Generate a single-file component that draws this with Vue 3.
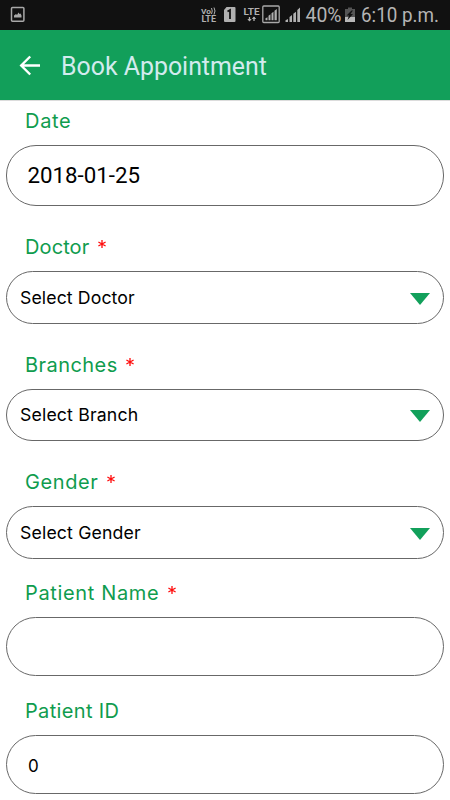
<template>
  <div class="screen">
    <div class="status-bar">
      <svg class="status-icons" width="450" height="30" viewBox="0 0 450 30">
        <!-- Screenshot notification -->
        <rect x="11.5" y="7.6" width="12.4" height="13.6" rx="1" fill="none" stroke="#a9a9a9" stroke-width="1.5" />
        <path d="M14 17.5v-2l2-1.5 1 1 1.5-2.5 1 1.5 1-.5 1 2v2z" fill="#a9a9a9" />
        <!-- VoLTE -->
        <g fill="#b0b0b0" font-weight="700" font-family="Roboto, sans-serif">
          <text x="201" y="13.5" font-size="7.5" textLength="10" lengthAdjust="spacingAndGlyphs">Vo</text>
          <text x="201.500" y="22" font-size="8.5" textLength="14.500" lengthAdjust="spacingAndGlyphs">LTE</text>
          <text x="243.500" y="15" font-size="9.5" textLength="16" lengthAdjust="spacingAndGlyphs">LTE</text>
        </g>
        <path d="M211.500 8q1.500 3 0 6M214 7.500q2 3.500 0 7" fill="none" stroke="#b0b0b0" stroke-width="1" />
        <!-- SIM 1 -->
        <path d="M226.500 7H234.500a1 1 0 0 1 1 1V21a1 1 0 0 1-1 1H225a1 1 0 0 1-1-1V10z" fill="#b0b0b0" />
        <path d="M227.500 11.500l2.500-1.500v9" fill="none" stroke="#111" stroke-width="1.800" />
        <!-- Data arrows -->
        <path d="M249.500 17v4M254 21v-4" stroke="#b0b0b0" stroke-width="1.300" />
        <path d="M247.300 19h4.400l-2.200 2.600zM251.800 19h4.400l-2.200-2.600z" fill="#b0b0b0" />
        <!-- Signals -->
        <rect x="262.800" y="6" width="16.400" height="16.500" rx="1" fill="none" stroke="#a9a9a9" stroke-width="1.300" />
        <path d="M265.500 20.200v-2l2-1v3zM268.500 20.200v-4.500l2-1.500v6zM271.500 20.200v-7l2-1.500v8.500zM274.500 20.200v-9.500l2.300-1.700v11.200z" fill="#b0b0b0" />
        <path d="M285.500 22v-1.800l2.500-1.200v3zM289.500 22v-5l2.500-2v7zM293.300 22v-8.300l2.700-2v10.300zM297.300 22v-12l2.700-2.500v14.500z" fill="#b0b0b0" />
        <text x="305.500" y="21.500" font-size="19.500" fill="#b4b4b4" font-family="Roboto, sans-serif" textLength="36" lengthAdjust="spacingAndGlyphs">40%</text>
        <!-- Battery -->
        <path d="M345 9h3V7.500h4V9h3v8h-10z" fill="#555" />
        <path d="M345 17h10v5h-10z" fill="#b8b8b8" />
        <path d="M351.500 10.500l-5 5h2.500l-1.500 4.500 5.500-6h-2.500l2.500-3.500z" fill="#111" />
        <text x="361" y="21.500" font-size="19.500" fill="#b4b4b4" font-family="Roboto, sans-serif" textLength="78" lengthAdjust="spacingAndGlyphs">6:10 p.m.</text>
      </svg>
    </div>

    <header class="toolbar">
      <button class="btn-back" aria-label="Back">
        <svg width="22" height="22" viewBox="0 0 22 22">
          <path d="M21 10.500H2.500M11.200 1.500L2.200 10.500l9 9" fill="none" stroke="#fff" stroke-width="2.400" />
        </svg>
      </button>
      <h1>Book Appointment</h1>
    </header>

    <form class="form" @submit.prevent>
      <div v-for="campo in campos" :key="campo.id" class="field" :class="'field-' + campo.tipo">
        <label :for="campo.id">
          <span class="label-text" :style="{ letterSpacing: campo.espacio + 'px' }">{{ campo.label }}</span>
          <svg v-if="campo.requerido" class="required" width="8" height="8" viewBox="0 0 8 8">
            <path d="M4 0v8M.4 2l7.200 4M.4 6l7.200-4" stroke="#ff0d0d" stroke-width="1.300" />
          </svg>
        </label>
        <button v-if="campo.tipo === 'select'" :id="campo.id" type="button" class="box select">
          <span :style="{ letterSpacing: campo.espacioValor + 'px' }">{{ campo.valor }}</span>
          <svg width="20" height="12" viewBox="0 0 20 12"><path d="M0 0h20L10 12z" fill="#12a05b" /></svg>
        </button>
        <input v-else :id="campo.id" v-model="campo.valor" type="text" class="box" />
      </div>
    </form>
  </div>
</template>

<script setup>
import { ref } from 'vue';

const campos = ref([
  { id: 'date', label: 'Date', tipo: 'date', valor: '2018-01-25', espacio: 0.7 },
  { id: 'doctor', label: 'Doctor', tipo: 'select', valor: 'Select Doctor', requerido: true, espacio: 0.1, espacioValor: 0.1 },
  { id: 'branches', label: 'Branches', tipo: 'select', valor: 'Select Branch', requerido: true, espacio: 0.45, espacioValor: 0.15 },
  { id: 'gender', label: 'Gender', tipo: 'select', valor: 'Select Gender', requerido: true, espacio: 0.6, espacioValor: 0.15 },
  { id: 'name', label: 'Patient Name', tipo: 'text', valor: '', requerido: true, espacio: 0.65 },
  { id: 'patient-id', label: 'Patient ID', tipo: 'text', valor: '0', espacio: 0.35 }
]);
</script>

<style>
body { margin: 0; background: #fff; }
</style>

<style scoped>
.screen {
  width: 450px;
  height: 800px;
  overflow: hidden;
  background: #fff;
  font-family: Inter, "Open Sans", sans-serif;
}
.status-bar { height: 30px; background: #111; }
.status-icons { display: block; }
.toolbar {
  display: flex;
  align-items: center;
  box-sizing: border-box;
  height: 70px;
  padding: 2px 19px 0;
  background: #129f5a;
  box-shadow: 0 1px 0 #dcdcdc;
}
.btn-back {
  display: flex;
  padding: 0;
  border: none;
  background: none;
}
.toolbar h1 {
  margin: 0 0 0 20px;
  color: #d3ebee;
  font-family: Roboto, sans-serif;
  font-size: 24.9px;
  font-weight: 400;
}
.form { padding: 1px 6px 0; }
.field { margin-bottom: 21px; }
.field:nth-child(n + 4) { margin-bottom: 14.5px; }
.field label {
  display: flex;
  align-items: center;
  height: 40px;
  margin-bottom: 4px;
  padding-left: 19px;
  color: #0f9c4e;
  font-size: 20px;
}
.required { margin: -6px 0 0 8.5px; }
.box {
  display: block;
  box-sizing: border-box;
  width: 438px;
  height: 59px;
  padding: 3px 21px 0;
  border: 1px solid #686868;
  border-radius: 30px;
  background: #fff;
  color: #000;
  font-family: Inter, sans-serif;
  font-size: 17px;
  outline: none;
}
.field-date .box {
  height: 61px;
  padding: 0 20.5px 1px;
  font-family: Roboto, sans-serif;
  font-size: 22.3px;
}
.select {
  display: flex;
  align-items: center;
  justify-content: space-between;
  height: 52.5px;
  padding: 0 13px;
  font-size: 17.7px;
}
.select svg { margin-top: 3px; }
</style>
